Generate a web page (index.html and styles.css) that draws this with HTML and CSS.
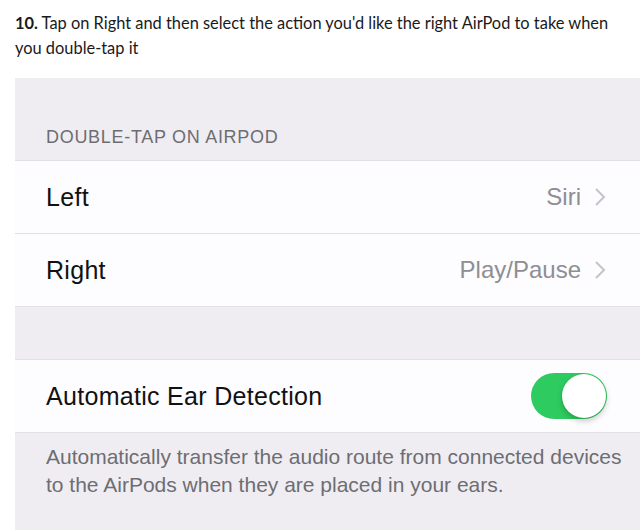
FILE: index.html
```html
<!DOCTYPE html>
<html>
<head>
<meta charset="utf-8">
<link rel="stylesheet" href="styles.css">
</head>
<body>
<p class="step"><b>10.</b> Tap on Right and then select the action you'd like the right AirPod to take when you double-tap it</p>
<div class="shot">
  <div class="group-header">DOUBLE-TAP ON AIRPOD</div>
  <div class="group">
    <div class="row">
      <span class="label">Left</span>
      <span class="value">Siri</span>
      <svg class="chev" width="12" height="20" viewBox="0 0 12 20"><polyline points="2,2 10,10 2,18" fill="none" stroke="#c4c4c9" stroke-width="2"/></svg>
    </div>
    <div class="row">
      <span class="label">Right</span>
      <span class="value">Play/Pause</span>
      <svg class="chev" width="12" height="20" viewBox="0 0 12 20"><polyline points="2,2 10,10 2,18" fill="none" stroke="#c4c4c9" stroke-width="2"/></svg>
    </div>
  </div>
  <div class="spacer"></div>
  <div class="group">
    <div class="row">
      <span class="label">Automatic Ear Detection</span>
      <span class="toggle"><span class="knob"></span></span>
    </div>
  </div>
  <div class="footer">Automatically transfer the audio route from connected devices to the AirPods when they are placed in your ears.</div>
</div>
</body>
</html>
```
FILE: styles.css
```css
html, body {
  margin: 0;
  padding: 0;
  background: #ffffff;
}
body {
  width: 640px;
  height: 530px;
  overflow: hidden;
}
.step {
  margin: 0;
  padding: 10px 15px 0 15px;
  font-family: Lato, "Open Sans", sans-serif;
  font-size: 16.4px;
  line-height: 25px;
  color: #1a1a1a;
  height: 78px;
  box-sizing: border-box;
}
.step b {
  font-weight: 700;
}
.shot {
  margin-left: 15px;
  background: #efedf2;
  font-family: "Liberation Sans", Arial, sans-serif;
}
.group-header {
  height: 82px;
  box-sizing: border-box;
  padding: 48px 0 0 31px;
  font-size: 18px;
  letter-spacing: 0.7px;
  line-height: 22px;
  color: #6d6d72;
}
.group {
  background: #fdfcfe;
  border-top: 1px solid #e2e0e6;
  border-bottom: 1px solid #e2e0e6;
}
.row {
  display: flex;
  align-items: center;
  height: 72px;
  padding: 0 34px 0 31px;
}
.group .row + .row {
  border-top: 1px solid #e2e0e6;
}
.label {
  flex: 1;
  font-size: 25px;
  letter-spacing: 0.3px;
  color: #111111;
}
.value {
  font-size: 24px;
  color: #8e8e93;
  margin-right: 13px;
}
.chev {
  display: block;
}
.spacer {
  height: 52px;
}
.toggle {
  width: 76px;
  height: 46px;
  border-radius: 23px;
  background: #2ecc60;
  position: relative;
  margin-right: -1px;
}
.knob {
  position: absolute;
  right: 1px;
  top: 1px;
  width: 44px;
  height: 44px;
  border-radius: 50%;
  background: #ffffff;
  box-shadow: 0 3px 6px rgba(0,0,0,0.22), 0 0 1px rgba(0,0,0,0.15);
}
.footer {
  padding: 10px 10px 40px 31px;
  font-size: 21px;
  line-height: 28px;
  color: #6d6d72;
}
```
